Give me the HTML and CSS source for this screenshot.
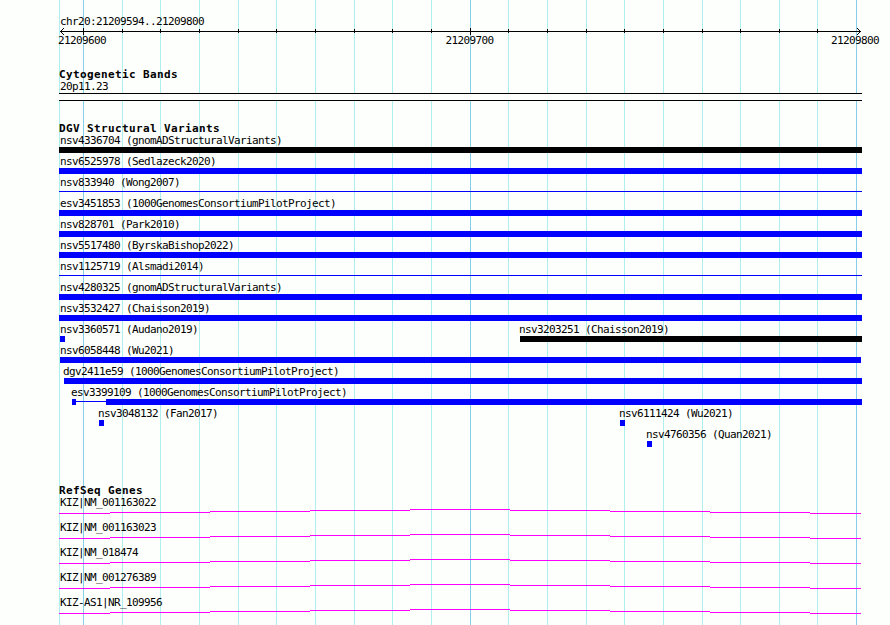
FILE: index.html
```
<!DOCTYPE html>
<html lang="en">
<head>
    <meta charset="UTF-8">
    <meta name="viewport" content="width=device-width, initial-scale=1.0">
    <title>chr20:21209594..21209800</title>
    <link rel="stylesheet" href="styles.css">
</head>
<body>
    <div class="browser">
        <!-- grid behind all tracks -->
        <svg class="grid" width="890" height="625" shape-rendering="crispEdges">
            <path class="minor" d="M59.5 0V625M122.5 0V625M160.5 0V625M199.5 0V625M238.5 0V625M276.5 0V625M315.5 0V625M354.5 0V625M392.5 0V625M431.5 0V625M508.5 0V625M547.5 0V625M586.5 0V625M624.5 0V625M663.5 0V625M702.5 0V625M740.5 0V625M779.5 0V625M817.5 0V625"/>
            <path class="major" d="M83.5 0V625M470.5 0V625M856.5 0V625"/>
        </svg>

        <div class="ruler">
            <div class="label">chr20:21209594..21209800</div>
            <svg class="axis" width="803" height="7" shape-rendering="crispEdges">
                <path d="M1 3.5H802"/>
                <path d="M63.5 1V5M101.5 1V5M140.5 1V5M179.5 1V5M217.5 1V5M256.5 1V5M295.5 1V5M333.5 1V5M372.5 1V5M449.5 1V5M488.5 1V5M527.5 1V5M565.5 1V5M604.5 1V5M643.5 1V5M681.5 1V5M720.5 1V5M758.5 1V5"/>
                <path d="M24.5 0V7M411.5 0V7"/>
                <path d="M2 2.5H3M3 1.5H4M4 0.5H5M2 4.5H3M3 5.5H4M4 6.5H5"/>
                <path d="M800 2.5H801M799 1.5H800M798 0.5H799M800 4.5H801M799 5.5H800M798 6.5H799"/>
            </svg>
            <div class="scale">
                <span>21209600</span>
                <span class="middle">21209700</span>
                <span>21209800</span>
            </div>
        </div>

        <div class="track bands">
            <h2>Cytogenetic Bands</h2>
            <div class="label">20p11.23</div>
            <div class="band"></div>
        </div>

        <div class="track variants">
            <h2>DGV Structural Variants</h2>
            <div class="row">
                <div class="item"><div class="label">nsv4336704 (gnomADStructuralVariants)</div><div class="bar black"></div></div>
            </div>
            <div class="row">
                <div class="item"><div class="label">nsv6525978 (Sedlazeck2020)</div><div class="bar"></div></div>
            </div>
            <div class="row">
                <div class="item"><div class="label">nsv833940 (Wong2007)</div><div class="bar thin"></div></div>
            </div>
            <div class="row">
                <div class="item"><div class="label">esv3451853 (1000GenomesConsortiumPilotProject)</div><div class="bar"></div></div>
            </div>
            <div class="row">
                <div class="item"><div class="label">nsv828701 (Park2010)</div><div class="bar"></div></div>
            </div>
            <div class="row">
                <div class="item"><div class="label">nsv5517480 (ByrskaBishop2022)</div><div class="bar"></div></div>
            </div>
            <div class="row">
                <div class="item"><div class="label">nsv1125719 (Alsmadi2014)</div><div class="bar thin"></div></div>
            </div>
            <div class="row">
                <div class="item"><div class="label">nsv4280325 (gnomADStructuralVariants)</div><div class="bar"></div></div>
            </div>
            <div class="row">
                <div class="item"><div class="label">nsv3532427 (Chaisson2019)</div><div class="bar"></div></div>
            </div>
            <div class="row">
                <div class="item" style="width: 461px"><div class="label">nsv3360571 (Audano2019)</div><div class="bar small first"></div></div>
                <div class="item"><div class="label offset">nsv3203251 (Chaisson2019)</div><div class="bar black"></div></div>
            </div>
            <div class="row">
                <div class="item"><div class="label">nsv6058448 (Wu2021)</div><div class="bar inset"></div></div>
            </div>
            <div class="row" style="padding-left: 5px">
                <div class="item"><div class="label offset">dgv2411e59 (1000GenomesConsortiumPilotProject)</div><div class="bar"></div></div>
            </div>
            <div class="row" style="padding-left: 13px">
                <div class="item">
                    <div class="label offset">esv3399109 (1000GenomesConsortiumPilotProject)</div>
                    <div class="parts"><div class="bar exon"></div><div class="bar thin link"></div><div class="bar rest"></div></div>
                </div>
            </div>
            <div class="row" style="padding-left: 40px">
                <div class="item" style="width: 521px"><div class="label offset">nsv3048132 (Fan2017)</div><div class="bar small"></div></div>
                <div class="item"><div class="label offset">nsv6111424 (Wu2021)</div><div class="bar small"></div></div>
            </div>
            <div class="row" style="padding-left: 588px">
                <div class="item"><div class="label offset">nsv4760356 (Quan2021)</div><div class="bar small"></div></div>
            </div>
        </div>

        <div class="track genes">
            <h2>RefSeq Genes</h2>
            <div class="gene">
                <div class="label">KIZ|NM_001163022</div>
                <svg class="intron" width="802" height="5" shape-rendering="crispEdges"><path d="M0 4.5H51M51 3.5H151M151 2.5H251M251 1.5H351M351 0.5H451M451 1.5H551M551 2.5H651M651 3.5H751M751 4.5H802"/></svg>
            </div>
            <div class="gene">
                <div class="label">KIZ|NM_001163023</div>
                <svg class="intron" width="802" height="5" shape-rendering="crispEdges"><path d="M0 4.5H51M51 3.5H151M151 2.5H251M251 1.5H351M351 0.5H451M451 1.5H551M551 2.5H651M651 3.5H751M751 4.5H802"/></svg>
            </div>
            <div class="gene">
                <div class="label">KIZ|NM_018474</div>
                <svg class="intron" width="802" height="5" shape-rendering="crispEdges"><path d="M0 4.5H51M51 3.5H151M151 2.5H251M251 1.5H351M351 0.5H451M451 1.5H551M551 2.5H651M651 3.5H751M751 4.5H802"/></svg>
            </div>
            <div class="gene">
                <div class="label">KIZ|NM_001276389</div>
                <svg class="intron" width="802" height="5" shape-rendering="crispEdges"><path d="M0 4.5H51M51 3.5H151M151 2.5H251M251 1.5H351M351 0.5H451M451 1.5H551M551 2.5H651M651 3.5H751M751 4.5H802"/></svg>
            </div>
            <div class="gene">
                <div class="label">KIZ-AS1|NR_109956</div>
                <svg class="intron" width="802" height="5" shape-rendering="crispEdges"><path d="M0 4.5H51M51 3.5H151M151 2.5H251M251 1.5H351M351 0.5H451M451 1.5H551M551 2.5H651M651 3.5H751M751 4.5H802"/></svg>
            </div>
        </div>
    </div>
</body>
</html>
```
FILE: styles.css
```
*{
    box-sizing: border-box;
}
body{
    margin: 0;
    background-color: #fdfffc;
    color: #000;
    font-family: "DejaVu Sans Mono", monospace;
    font-size: 11px;
}
.browser{
    position: relative;
    isolation: isolate;
    width: 890px;
    height: 625px;
    padding: 13px 28px 0 59px;
    overflow: hidden;
}
.grid{
    position: absolute;
    top: 0;
    left: 0;
    z-index: -1;
}
.grid path{
    fill: none;
    stroke-width: 1;
}
.minor{
    stroke: #afeeee;
}
.major{
    stroke: #87ceeb;
}
.label{
    height: 15px;
    padding-left: 1px;
    line-height: 17px;
    letter-spacing: -0.62px;
    white-space: nowrap;
}
.label.offset{
    padding-left: 0;
    margin-left: -1px;
}
h2{
    height: 12px;
    margin: 0;
    font-size: 11px;
    font-weight: bold;
    line-height: 17px;
    letter-spacing: 0.38px;
}
/* ruler */
.ruler{
    height: 53px;
}
.axis{
    display: block;
}
.axis path,
.intron path{
    fill: none;
    stroke: #000;
    stroke-width: 1;
}
.scale{
    display: flex;
    justify-content: space-between;
    width: 821px;
    margin: -3px 0 0 -1px;
    line-height: 17px;
    letter-spacing: -0.62px;
}
.middle{
    padding-left: 2px;
}
/* tracks */
.band{
    width: 803px;
    height: 8px;
    border-top: 1px solid #000;
    border-bottom: 1px solid #000;
    background-color: #fdfffc;
}
.variants{
    margin-top: 19px;
}
.row{
    display: flex;
    width: 803px;
    height: 21px;
}
.item{
    flex: 1 1 auto;
}
.item[style]{
    flex: none;
}
.bar{
    height: 6px;
    background-color: #0000ff;
}
.black{
    background-color: #000;
}
.thin{
    height: 1px;
    margin-top: 2px;
}
.small{
    width: 5px;
}
.first{
    margin-left: 1px;
}
.inset{
    margin: 0 1px;
}
.parts{
    display: flex;
}
.exon{
    width: 4px;
}
.link{
    width: 30px;
}
.rest{
    flex: 1;
}
/* genes */
.genes{
    margin-top: 35px;
}
.gene{
    height: 25px;
}
.intron{
    display: block;
}
.intron path{
    stroke: #ff00ff;
}
```
